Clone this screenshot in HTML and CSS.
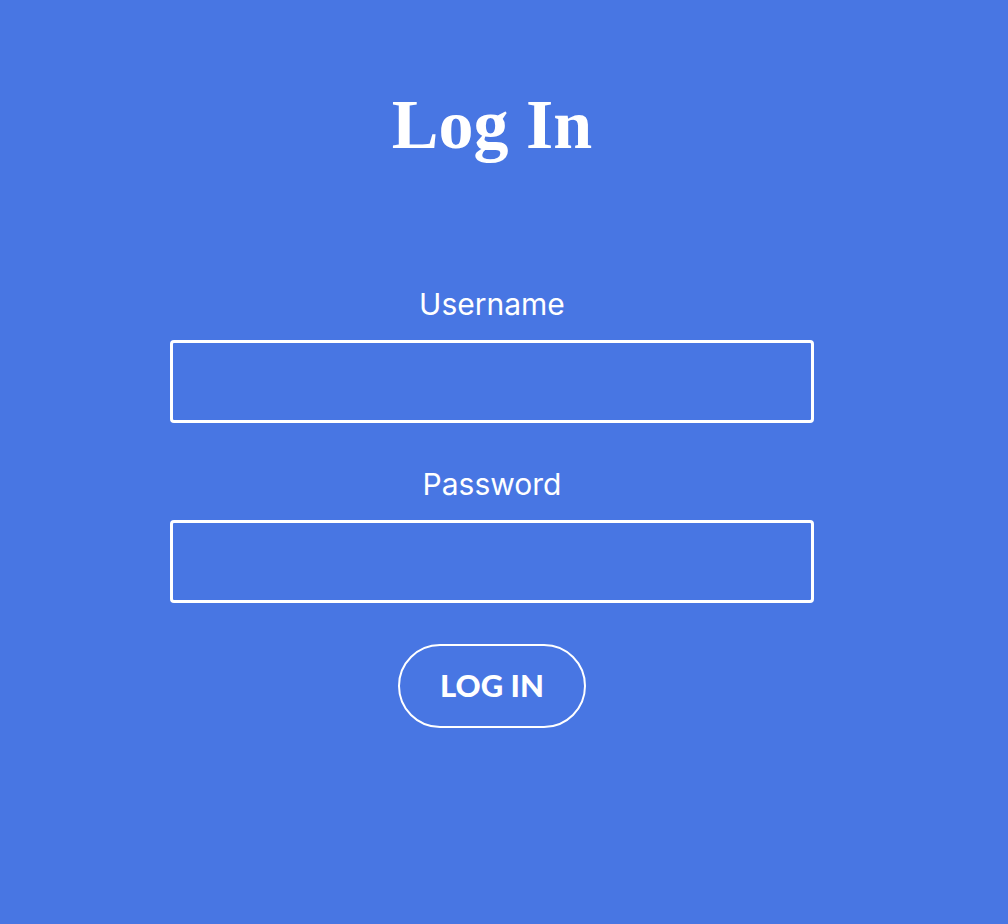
FILE: index.html
```html
<!DOCTYPE html>
<html>
<head>
<meta charset="utf-8">
<link rel="stylesheet" href="styles.css">
</head>
<body>
<main class="page">
  <h1 class="title">Log In</h1>
  <form class="form">
    <label class="label" for="u">Username</label>
    <input class="field" id="u" type="text">
    <label class="label" for="p">Password</label>
    <input class="field" id="p" type="password">
    <button class="btn" type="button">LOG IN</button>
  </form>
</main>
</body>
</html>
```
FILE: styles.css
```css
html, body {
  margin: 0;
  padding: 0;
  background: #4876e3;
  height: 100%;
}
.page {
  width: 984px;
  display: flex;
  flex-direction: column;
  align-items: center;
  color: #fff;
}
.title {
  margin: 80px 0 0;
  font-family: "Liberation Serif", serif;
  font-weight: 700;
  font-size: 70px;
  line-height: 90px;
}
.form {
  margin-top: 114px;
  display: flex;
  flex-direction: column;
  align-items: center;
}
.label {
  font-family: Inter, sans-serif;
  font-size: 30px;
  line-height: 40px;
  margin-bottom: 16px;
}
.field {
  box-sizing: border-box;
  width: 644px;
  height: 83px;
  border: 3px solid #fff;
  border-radius: 4px;
  background: transparent;
  margin: 0 0 41px;
  outline: none;
  color: #fff;
  font-size: 24px;
}
.btn {
  box-sizing: border-box;
  width: 188px;
  height: 84px;
  border: 2px solid #fff;
  border-radius: 42px;
  background: transparent;
  color: #fff;
  font-family: Lato, sans-serif;
  font-weight: 900;
  font-size: 31px;
  line-height: 1;
  padding: 0 0 2px;
}
```
